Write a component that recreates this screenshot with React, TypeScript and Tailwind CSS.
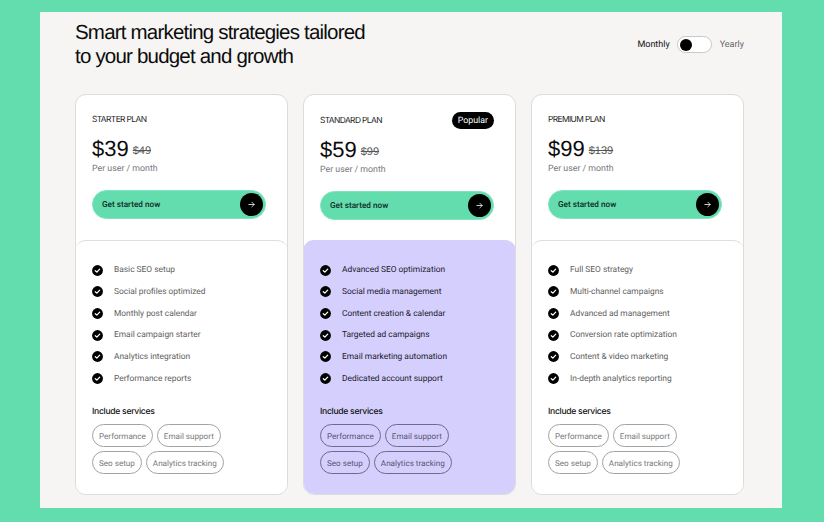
import React from "react";

type Plan = {
  name: string;
  price: string;
  old: string;
  features: string[];
  popular?: boolean;
};

const plans: Plan[] = [
  {
    name: "STARTER PLAN",
    price: "$39",
    old: "$49",
    features: ["Basic SEO setup", "Social profiles optimized", "Monthly post calendar", "Email campaign starter", "Analytics integration", "Performance reports"],
  },
  {
    name: "STANDARD PLAN",
    price: "$59",
    old: "$99",
    popular: true,
    features: ["Advanced SEO optimization", "Social media management", "Content creation & calendar", "Targeted ad campaigns", "Email marketing automation", "Dedicated account support"],
  },
  {
    name: "PREMIUM PLAN",
    price: "$99",
    old: "$139",
    features: ["Full SEO strategy", "Multi-channel campaigns", "Advanced ad management", "Conversion rate optimization", "Content & video marketing", "In-depth analytics reporting"],
  },
];

function Check() {
  return (
    <svg width="11" height="11" viewBox="0 0 12 12" className="shrink-0">
      <circle cx="6" cy="6" r="5.9" fill="#000" />
      <path d="M3.6 6.2l1.7 1.6 3.1-3.3" fill="none" stroke="#fff" strokeWidth="1.4" strokeLinecap="round" strokeLinejoin="round" />
    </svg>
  );
}

function Arrow() {
  return (
    <svg width="7" height="7" viewBox="0 0 8 8" fill="none" stroke="#fff" strokeWidth="0.9" strokeLinecap="round" strokeLinejoin="round">
      <path d="M1 4h6M4.4 1.4L7 4 4.4 6.6" />
    </svg>
  );
}

function Tag({ children, purple }: { children: React.ReactNode; purple?: boolean }) {
  return (
    <span className={`flex h-[23px] items-center rounded-full border px-[6px] text-[8.1px] ${purple ? "border-[#6f6a8c] text-[#57536f]" : "border-[#a3a3a3] text-[#77777a]"}`}>
      {children}
    </span>
  );
}

function Card({ plan }: { plan: Plan }) {
  const p = !!plan.popular;
  return (
    <div className="relative flex h-[401px] w-[213px] flex-col overflow-hidden rounded-[11px] border border-[#dcdcdc] bg-white">
      <div className={`flex h-[145px] flex-col px-4 ${p ? "pt-[21px]" : "pt-[20px]"}`}>
        <div className="flex h-[10px] items-center font-['Inter',sans-serif] text-[8.4px] tracking-[-0.6px] text-[#1c1c1c]">{plan.name}</div>
        <div className="mt-[11px] flex h-[26px] items-end font-['Liberation_Sans',sans-serif]">
          <span className="text-[22px] leading-[26px] text-[#0c0c0c]">{plan.price}</span>
          <span className="mb-[4px] ml-[4px] text-[11px] leading-[14px] text-[#555] line-through">{plan.old}</span>
        </div>
        <div className="mt-[1px] text-[8.8px] leading-[12px] text-[#77777a]">Per user / month</div>
        <div className="mt-[15px] flex h-[29px] w-[174px] items-center justify-between rounded-full border border-[#7fe5be] bg-[#63dcae] pl-[9px] pr-[2px]">
          <span className="mt-[2px] text-[8.2px] font-medium text-[#0e2a1f]">Get started now</span>
          <span className="flex h-[23px] w-[23px] items-center justify-center rounded-full bg-black">
            <Arrow />
          </span>
        </div>
      </div>
      <div className={`-mx-px flex flex-1 flex-col rounded-t-[11px] px-[17px] ${p ? "bg-[#d5cffe] pt-[24px]" : "border-t border-[#dfdfdf] bg-white pt-[23px]"}`}>
        <ul className="flex flex-col gap-[9.7px]">
          {plan.features.map((f) => (
            <li key={f} className={`flex h-3 items-center gap-[11px] text-[8.4px] ${p ? "text-[#1a1a2a]" : "text-[#5e5e60]"}`}>
              <Check />
              <span className="mt-[1px]">{f}</span>
            </li>
          ))}
        </ul>
        <div className="mt-[22px] font-['Inter',sans-serif] text-[8.6px] font-medium tracking-[-0.3px] text-[#111]">Include services</div>
        <div className="mt-[5px] flex w-[150px] flex-wrap gap-x-[4px] gap-y-[4px]">
          <Tag purple={p}>Performance</Tag>
          <Tag purple={p}>Email support</Tag>
          <Tag purple={p}>Seo setup</Tag>
          <Tag purple={p}>Analytics tracking</Tag>
        </div>
      </div>
      {p && (
        <span className="absolute right-[21px] top-[17px] flex h-[17px] items-center rounded-full bg-black px-[6px] pt-[2px] text-[8.8px] text-white">
          Popular
        </span>
      )}
    </div>
  );
}

export default function App() {
  return (
    <div className="flex h-[522px] w-[824px] items-start bg-[#63dcae] px-[40px] pt-[12px] font-['Roboto','Liberation_Sans',sans-serif] [text-rendering:geometricPrecision]">
      <div className="flex h-[496px] w-[742px] flex-col bg-[#f6f5f3] pl-[35px] pr-[38px]">
        <div className="flex h-[82px] items-start justify-between">
          <h1 className="mt-[9px] font-['Liberation_Sans',sans-serif] text-[20.5px] font-normal leading-[24px] tracking-[-0.8px] text-[#0c0c0c]">
            Smart marketing strategies tailored
            <br />
            to your budget and growth
          </h1>
          <div className="mt-[24px] flex items-center">
            <span className="mt-[2px] text-[9px] text-[#111]">Monthly</span>
            <span className="ml-[7px] flex h-[17px] w-[35px] items-center rounded-full border border-[#c8c8c8] bg-white pl-[2px]">
              <span className="h-[12px] w-[12px] rounded-full bg-black" />
            </span>
            <span className="ml-[8px] mt-[2px] text-[9px] text-[#66666a]">Yearly</span>
          </div>
        </div>
        <div className="flex gap-[15px]">
          {plans.map((p) => (
            <Card key={p.name} plan={p} />
          ))}
        </div>
      </div>
    </div>
  );
}
